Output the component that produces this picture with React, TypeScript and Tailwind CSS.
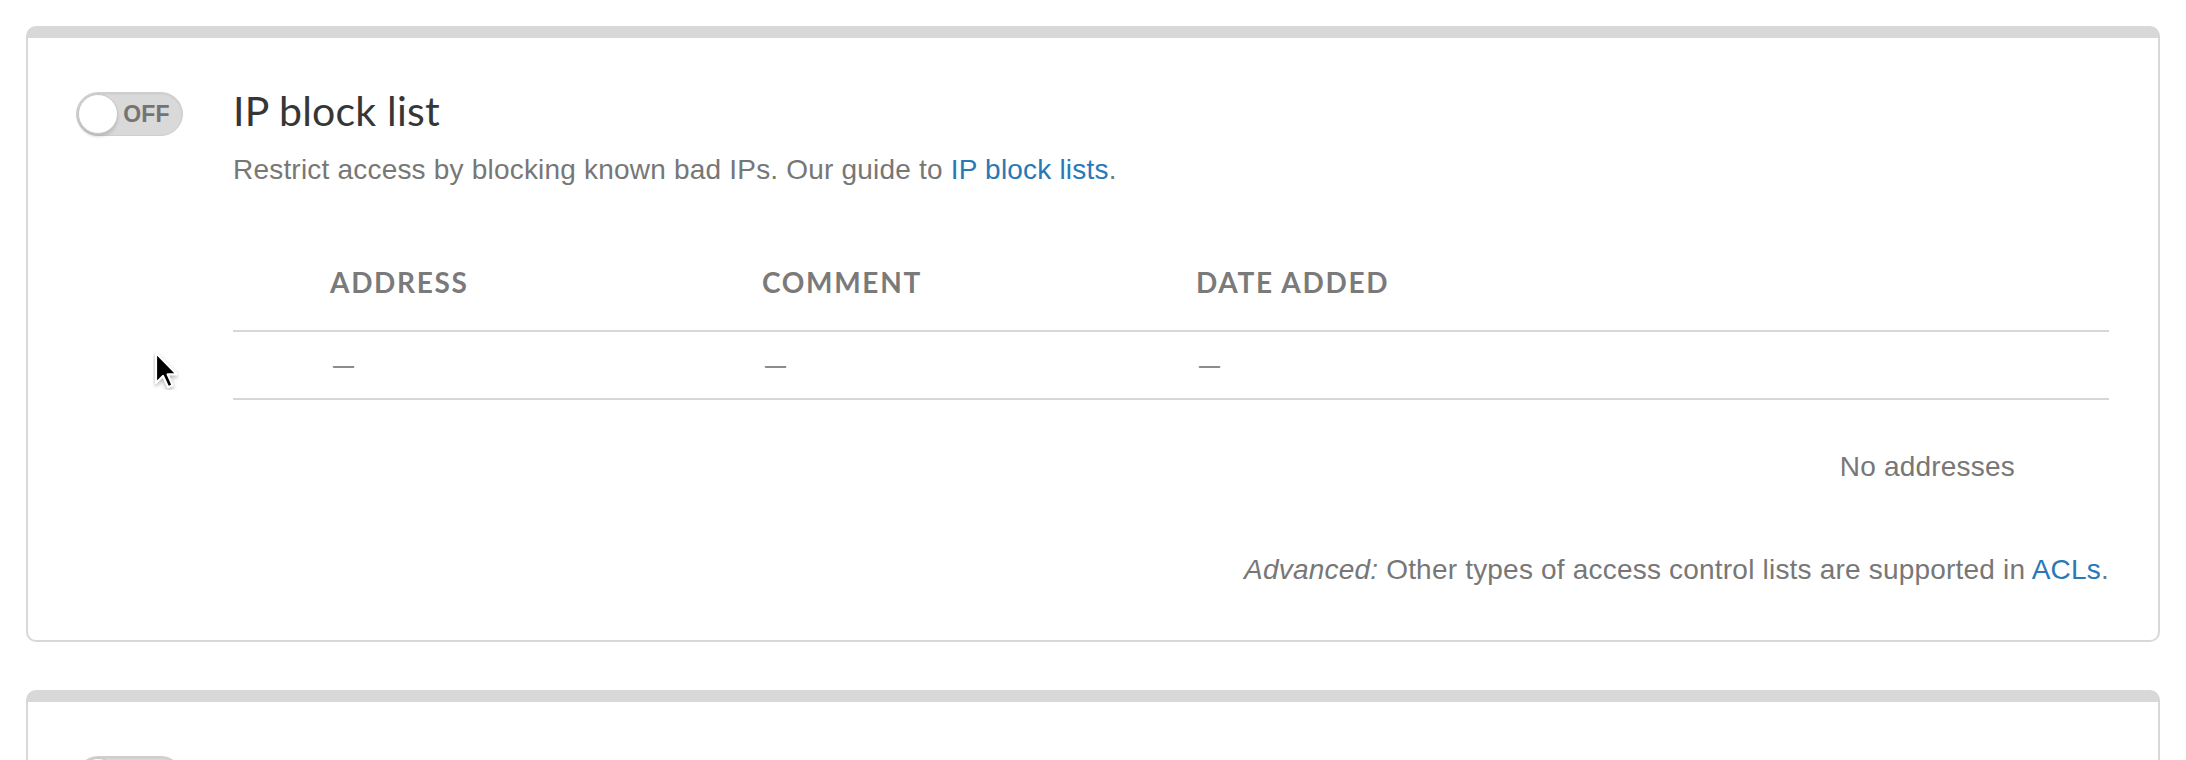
import React from "react";

const sans = "font-['Liberation_Sans',Arial,sans-serif] tracking-[0.2px]";
const display = "font-['Lato','Open_Sans',sans-serif]";

function Toggle() {
  return (
    <div className="relative h-[44px] w-[107px] shrink-0 rounded-full border border-[#cfcfcf] bg-[#d9d9d9] shadow-[inset_0_1px_2px_rgba(0,0,0,0.08)]">
      <div className="absolute left-[1px] top-[1px] size-[40px] rounded-full border border-[#c6c6c6] bg-white shadow-[0_3px_3px_rgba(0,0,0,0.12)]" />
      <span
        className={`absolute left-[46px] right-[12px] top-0 flex h-full items-center justify-center text-[23px] font-bold text-[#747474] ${sans}`}
      >
        OFF
      </span>
    </div>
  );
}

function Card({ children }: { children?: React.ReactNode }) {
  return (
    <section className="rounded-[10px] border-2 border-t-[12px] border-[#d8d8d8] bg-white">
      {children}
    </section>
  );
}

const columns = ["ADDRESS", "COMMENT", "DATE ADDED"];

function BlockTable() {
  return (
    <div className="mt-[76px]">
      <div className="grid grid-cols-[97px_432px_434px_1fr] border-b-2 border-[#d7d7d7] pb-[32px]">
        <div />
        {columns.map((c) => (
          <div
            key={c}
            className={`text-[28px] leading-[32px] font-bold tracking-[0.06em] text-[#7a7a7a] ${display}`}
          >
            {c}
          </div>
        ))}
        <div />
      </div>
      <div className="grid h-[68px] grid-cols-[97px_432px_434px_1fr] items-center border-b-2 border-[#d7d7d7]">
        <div />
        {columns.map((c) => (
          <div
            key={c}
            className={`translate-y-[11px] pl-[3px] text-[21px] leading-none font-bold text-[#8c8c8c] ${sans}`}
          >
            —
          </div>
        ))}
        <div />
      </div>
    </div>
  );
}

function Cursor() {
  return (
    <svg
      className="absolute left-[153px] top-[350px]"
      width="26"
      height="40"
      viewBox="0 0 13 20"
    >
      <path
        d="M1.5 1.5 L1.5 16.5 L5 13 L7.6 18.6 L9.8 17.6 L7.3 12.2 L12 12.2 Z"
        fill="#000"
        stroke="#fff"
        strokeWidth="1.1"
        strokeLinejoin="round"
        style={{ filter: "drop-shadow(0 1px 1px rgba(0,0,0,0.3))" }}
      />
    </svg>
  );
}

export default function App() {
  return (
    <div className="relative min-h-screen overflow-hidden bg-white px-[26px] pt-[26px]">
      <Card>
        <div className="flex items-start pl-[48px] pr-[49px] pt-[49px] pb-[50px]">
          <div className="mt-[5px]">
            <Toggle />
          </div>
          <div className="ml-[50px] flex-1">
            <h2
              className={`text-[41px] leading-[48px] font-normal tracking-[0.2px] text-[#363636] ${display}`}
            >
              IP block list
            </h2>
            <p className={`mt-[15px] text-[28px] leading-[40px] text-[#777] ${sans}`}>
              Restrict access by blocking known bad IPs. Our guide to{" "}
              <a href="#" className="text-[#2a79b5]">
                IP block lists
              </a>
              .
            </p>
            <BlockTable />
            <p className={`mt-[47px] pr-[94px] text-right text-[28px] leading-[40px] text-[#777] ${sans}`}>
              No addresses
            </p>
            <p className={`mt-[63px] text-right text-[28px] leading-[40px] text-[#777] ${sans}`}>
              <em>Advanced:</em> Other types of access control lists are supported in{" "}
              <a href="#" className="text-[#2a79b5]">
                ACLs
              </a>
              .
            </p>
          </div>
        </div>
      </Card>
      <div className="mt-[48px]">
        <Card>
          <div className="flex items-start pl-[48px] pt-[54px] pb-[120px]">
            <Toggle />
          </div>
        </Card>
      </div>
      <Cursor />
    </div>
  );
}
